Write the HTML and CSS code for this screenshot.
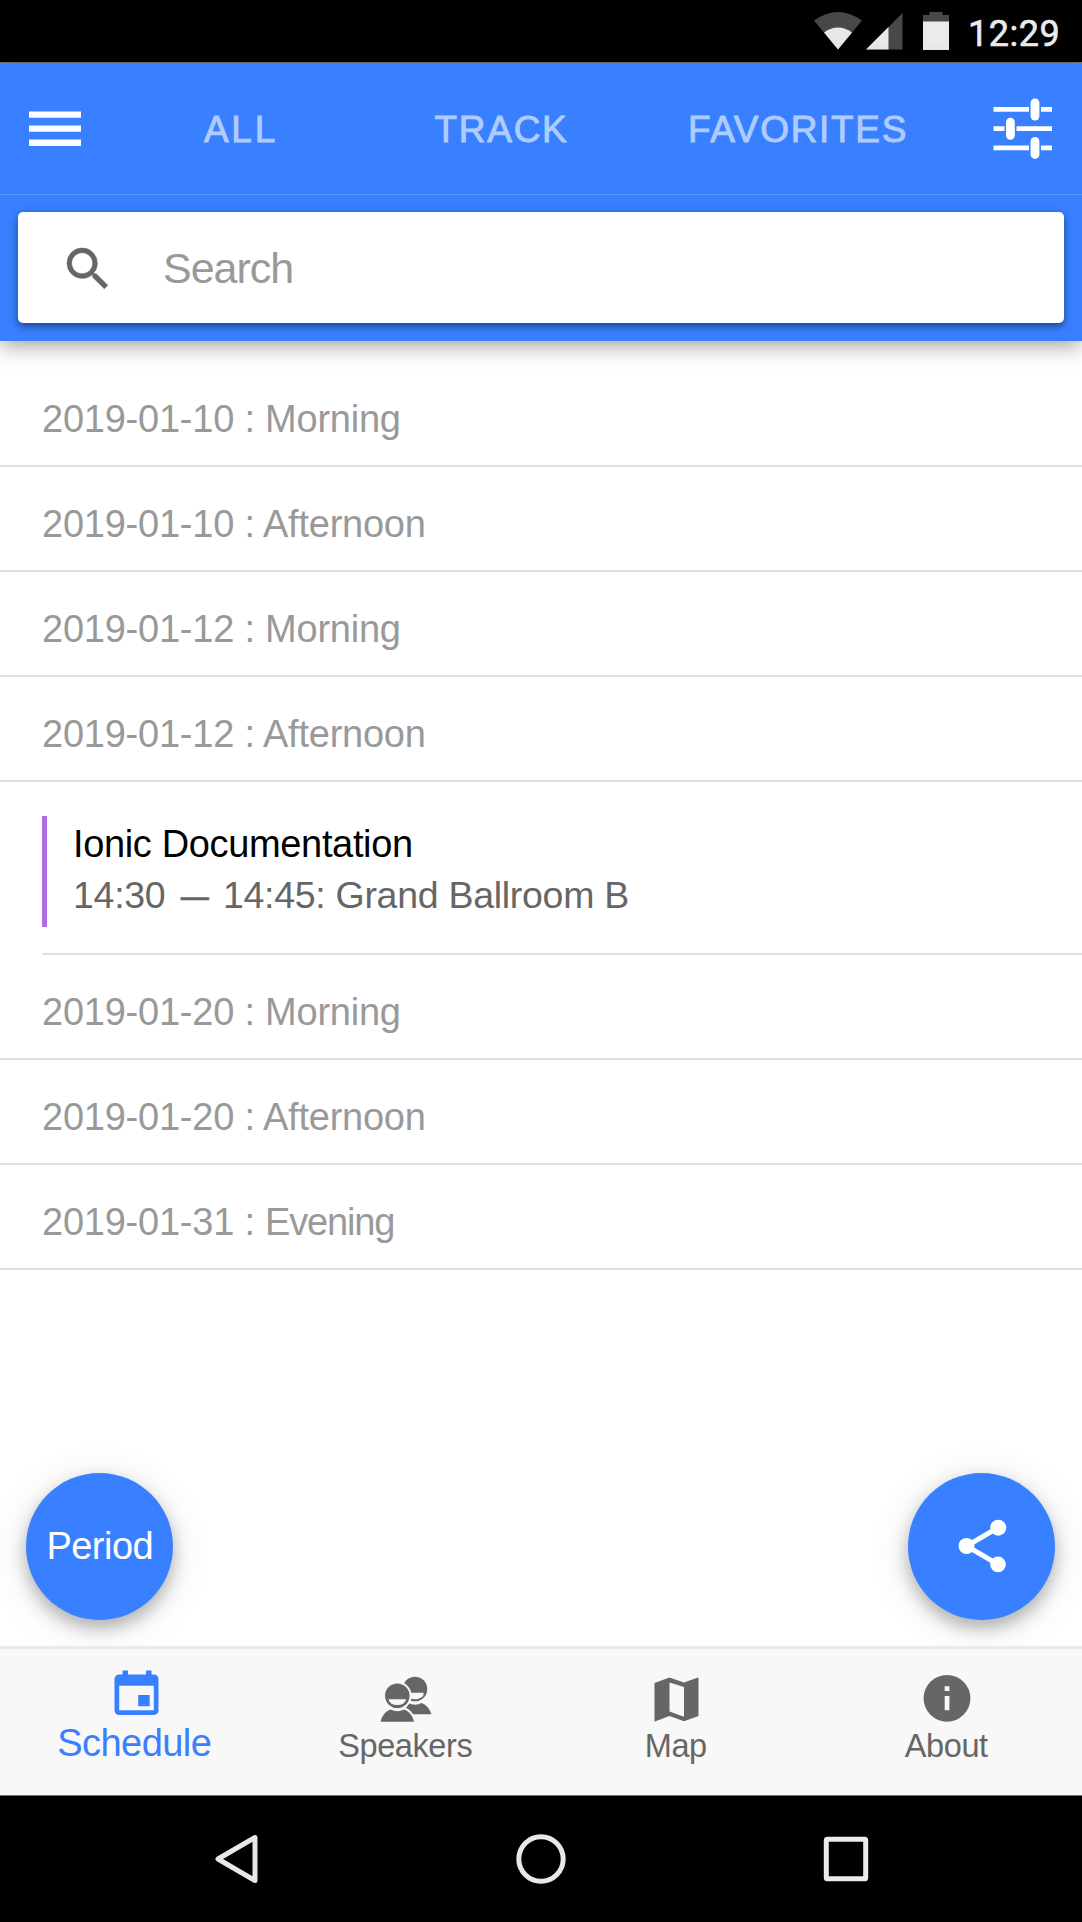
FILE: index.html
```html
<!DOCTYPE html>
<html lang="en">
<head>
<meta charset="utf-8">
<title>Schedule</title>
<link rel="stylesheet" href="styles.css">
</head>
<body>
<div class="status-bar">
  <svg class="status-icon wifi" width="48" height="38" viewBox="0 0 48 38">
    <path fill="#484848" d="M0 8.500Q24-8.500 48 8.500L24 37.500z"/>
    <path fill="#e8e8e8" d="M10 20.500Q24 10.500 38 20.500L24 37.500z"/>
  </svg>
  <svg class="status-icon signal" width="37" height="37" viewBox="0 0 37 37">
    <path fill="#484848" d="M36.500 0V36.500H0z"/>
    <path fill="#e8e8e8" d="M22.500 14V36.500H0z"/>
  </svg>
  <svg class="status-icon battery" width="26" height="38" viewBox="0 0 26 38">
    <path fill="#484848" d="M6.500 0h13v3H26v7H0V3h6.500z"/>
    <path fill="#ebebeb" d="M0 9.500h26V38H0z"/>
  </svg>
  <span class="clock">12:29</span>
</div>

<header class="header">
  <nav class="toolbar">
    <svg class="menu-icon" width="53" height="36" viewBox="0 0 53 36" fill="#fff">
      <path d="M0 .500h52v6.300H0zM0 14.500h52v6.300H0zM0 28.600h52v6.300H0z"/>
    </svg>
    <span class="segment segment-all">ALL</span>
    <span class="segment">TRACK</span>
    <span class="segment">FAVORITES</span>
    <svg class="filter-icon" width="60" height="62" viewBox="0 0 60 62" fill="#fff">
      <path d="M.500 9h35.500v4.700H.500zM48 9h11v4.700H48zM.500 28.300H11.500V33H.500zM23.500 28.300H59V33H23.500zM.500 47.500h35.500v4.700H.500zM48 47.500h11v4.700H48z"/>
      <rect x="37.600" y="0.500" width="8.800" height="22" rx="4.400"/>
      <rect x="13" y="19.700" width="8.800" height="22" rx="4.400"/>
      <rect x="37.600" y="38.900" width="8.800" height="22" rx="4.400"/>
    </svg>
  </nav>
  <div class="search-row">
    <div class="search-box">
      <svg width="56" height="56" viewBox="0 0 24 24" fill="#666" stroke="#666" stroke-width="0.250">
        <path d="M15.500 14h-.790l-.280-.270A6.471 6.471 0 0 0 16 9.500 6.500 6.500 0 1 0 9.500 16c1.610 0 3.090-.590 4.230-1.570l.270.280v.790l5 4.990L20.490 19l-4.990-5zm-6 0C7.010 14 5 11.990 5 9.500S7.010 5 9.500 5 14 7.010 14 9.500 11.990 14 9.500 14z"/>
      </svg>
      <span class="placeholder">Search</span>
    </div>
  </div>
</header>

<main class="content">
  <div class="divider">2019-01-10 : Morning</div>
  <div class="divider">2019-01-10 : Afternoon</div>
  <div class="divider">2019-01-12 : Morning</div>
  <div class="divider">2019-01-12 : Afternoon</div>
  <div class="session">
    <div class="session-body">
      <h3 class="session-title">Ionic Documentation</h3>
      <p class="session-info">14:30 <span class="dash">—</span> 14:45: Grand Ballroom B</p>
    </div>
  </div>
  <div class="divider">2019-01-20 : Morning</div>
  <div class="divider">2019-01-20 : Afternoon</div>
  <div class="divider"><span>2019-01-31 : <span class="tight">Evening</span></span></div>
  <div class="fab-row">
    <div class="fab">Period</div>
    <div class="fab">
      <svg width="50" height="54" viewBox="0 0 50 54">
        <path d="M41.200 8.700 9.500 27 41 45.400" fill="none" stroke="#fff" stroke-width="5"/>
        <g fill="#fff"><circle cx="41.200" cy="8.700" r="8"/><circle cx="9.500" cy="27" r="8"/><circle cx="41" cy="45.400" r="7.800"/></g>
      </svg>
    </div>
  </div>
</main>

<nav class="tabs">
  <div class="tab tab-active">
    <svg width="46" height="46" viewBox="0 0 46 46" fill="#3880ff">
      <path fill-rule="evenodd" d="M8.500 0.500h5.500v4h18V0.500h5.500v4H40a4.500 4.500 0 0 1 4.500 4.500v31A4.500 4.500 0 0 1 40 45H5a4.500 4.500 0 0 1-4.500-4.500v-31A4.500 4.500 0 0 1 5 4.500h3.500zM5.200 15.700v24.500h34.600V15.700zM24.200 25h11.500v11.200H24.200z"/>
    </svg>
    <span>Schedule</span>
  </div>
  <div class="tab">
    <svg width="52" height="46" viewBox="0 0 52 46">
      <g fill="#666">
        <circle cx="35" cy="13" r="12.300"/>
        <path d="M24 38.300h27.500c-2-6-5.500-9.800-10-11.300q-6 3.500-13.500 0z"/>
      </g>
      <path fill="#f8f8f8" d="M26 16.700h17.500a8.400 5.700 0 0 1-15 4.200z"/>
      <g fill="#666" stroke="#f8f8f8" stroke-width="4" paint-order="stroke">
        <path d="M.500 45.800h33.600c-1.700-6.500-5.300-10.800-10-12.300q-6.800 3.500-13.600 0c-4.700 1.500-8.300 5.800-10 12.300z"/>
        <circle cx="17.300" cy="19.800" r="12.300"/>
      </g>
      <path fill="#f8f8f8" d="M8.600 23.300h17.400a8.700 5.800 0 0 1-17.400 0z"/>
    </svg>
    <span>Speakers</span>
  </div>
  <div class="tab">
    <svg width="46" height="46" viewBox="0 0 46 46" fill="#666">
      <path fill-rule="evenodd" d="M.500 7 15.500 1.500 30 6.500 44 1.500a.500.500 0 0 1 .500.500V40L30 45.300 15.500 40 1.500 45.300a.600.600 0 0 1-1-.500zM15.500 6.500v29L30 40.700V11z"/>
    </svg>
    <span>Map</span>
  </div>
  <div class="tab">
    <svg width="48" height="48" viewBox="0 0 48 48">
      <circle cx="24" cy="24.300" r="23.400" fill="#666"/>
      <path fill="#f8f8f8" d="M21.700 12.300h4.700v4.600h-4.700zM21.700 22h4.700v14.300h-4.700z"/>
    </svg>
    <span>About</span>
  </div>
</nav>

<div class="nav-bar">
  <svg width="44" height="52" viewBox="0 0 44 52"><path d="M40 4.500v43L3 26z" fill="none" stroke="#e8e8e8" stroke-width="5" stroke-linejoin="round"/></svg>
  <svg width="52" height="52" viewBox="0 0 52 52"><circle cx="26" cy="26" r="22.200" fill="none" stroke="#e8e8e8" stroke-width="5"/></svg>
  <svg width="46" height="46" viewBox="0 0 46 46"><rect x="3.300" y="3.300" width="39.400" height="39.400" rx="1" fill="none" stroke="#ebebeb" stroke-width="5"/></svg>
</div>
</body>
</html>
```
FILE: styles.css
```css
* {
  box-sizing: border-box;
}

body {
  margin: 0;
  width: 1082px;
  height: 1922px;
  display: flex;
  flex-direction: column;
  overflow: hidden;
  background: #fff;
  font-family: "Liberation Sans", Arial, sans-serif;
  font-size: 38px;
}

svg {
  display: block;
  flex: none;
}

/* Android status bar */
.status-bar {
  flex: none;
  height: 63px;
  display: flex;
  align-items: flex-start;
  padding-left: 814px;
  background: #000;
  border-bottom: 1px solid #77797e;
}

.wifi {
  margin-top: 12px;
}

.signal {
  margin: 13px 0 0 4px;
}

.battery {
  margin: 12px 0 0 20px;
}

.clock {
  margin: 13px 0 0 19px;
  font: 400 36px/42px Roboto, sans-serif;
  letter-spacing: 0.5px;
  color: #ebebeb;
  -webkit-text-stroke: 0.6px #ebebeb;
}

/* App header */
.header {
  flex: none;
  height: 278px;
  background: #3880ff;
  box-shadow: 0 4px 21px rgba(0, 0, 0, 0.4);
}

.toolbar {
  height: 132px;
  display: grid;
  grid-template-columns: 110px 260px 261px 332px 1fr;
  align-items: center;
  border-bottom: 1px solid #5b96ff;
}

.menu-icon {
  margin-left: 29px;
}

.filter-icon {
  margin-left: 30px;
}

.segment {
  padding: 2px 0 0 2px;
  text-align: center;
  font-size: 37px;
  letter-spacing: 1.7px;
  color: #afccff;
  -webkit-text-stroke: 0.9px #afccff;
}

.segment-all {
  letter-spacing: 2.8px;
}

.search-row {
  padding: 17px 18px 0;
}

.search-box {
  height: 111px;
  display: flex;
  align-items: center;
  padding: 2px 0 0 42px;
  gap: 47px;
  background: #fff;
  border-radius: 5px;
  box-shadow: 0 4px 6px rgba(0, 0, 0, 0.3), 0 2px 12px rgba(0, 0, 0, 0.18);
}

.placeholder {
  font-size: 43px;
  letter-spacing: -1px;
  color: #999;
}

/* Schedule list */
.content {
  flex: 1;
  display: flex;
  flex-direction: column;
  padding-top: 21px;
}

.divider {
  height: 105px;
  display: flex;
  align-items: center;
  padding: 12px 0 0 42px;
  border-bottom: 2px solid #dfdfdf;
  letter-spacing: -0.23px;
  color: #999;
}

.tight {
  letter-spacing: -1.15px;
}

.session {
  height: 173px;
  margin-left: 42px;
  padding-top: 34px;
  border-bottom: 2px solid #dfdfdf;
}

.session-body {
  height: 111px;
  padding: 2px 0 0 26px;
  border-left: 5px solid #b26be3;
}

.session-title,
.session-info {
  margin: 0;
  font-weight: 400;
  line-height: 52px;
}

.session-title {
  font-size: 38px;
  letter-spacing: -0.35px;
  color: #000;
}

.session-info {
  font-size: 37.500px;
  line-height: 51px;
  letter-spacing: -0.29px;
  color: #666;
}

.dash {
  display: inline-block;
  line-height: 1;
  transform: scaleX(0.75);
  -webkit-text-stroke: 0.6px #666;
}

.fab-row {
  margin-top: auto;
  display: flex;
  justify-content: space-between;
  padding: 0 26.700px 26.500px 26.300px;
}

.fab {
  width: 147px;
  height: 147px;
  display: flex;
  align-items: center;
  justify-content: center;
  border-radius: 50%;
  background: #3880ff;
  color: #fff;
  letter-spacing: -0.5px;
  box-shadow: 0 8px 16px rgba(0, 0, 0, 0.25), 0 6px 40px rgba(0, 0, 0, 0.12);
}

/* Bottom tabs */
.tabs {
  flex: none;
  height: 150px;
  display: grid;
  grid-template-columns: repeat(4, 1fr);
  background: #f8f8f8;
  border-top: 3px solid #e9e9e9;
  border-bottom: 1px solid #3d7ae6;
}

.tab {
  display: flex;
  flex-direction: column;
  align-items: center;
  justify-content: flex-end;
  gap: 5px;
  padding: 0 1px 30px 0;
  font-size: 32.500px;
  line-height: 38px;
  letter-spacing: -0.4px;
  color: #666;
}

.tab svg {
  margin-left: 2px;
}

.tab-active {
  gap: 5px;
  padding: 0 2px 30px 0;
  font-size: 38px;
  line-height: 44px;
  letter-spacing: -0.55px;
  color: #3880ff;
}

.tab-active svg {
  margin-left: 5px;
}

/* Android navigation bar */
.nav-bar {
  flex: none;
  height: 126px;
  display: flex;
  align-items: center;
  justify-content: space-between;
  padding: 0 213px 0 215px;
  background: #000;
}
```
